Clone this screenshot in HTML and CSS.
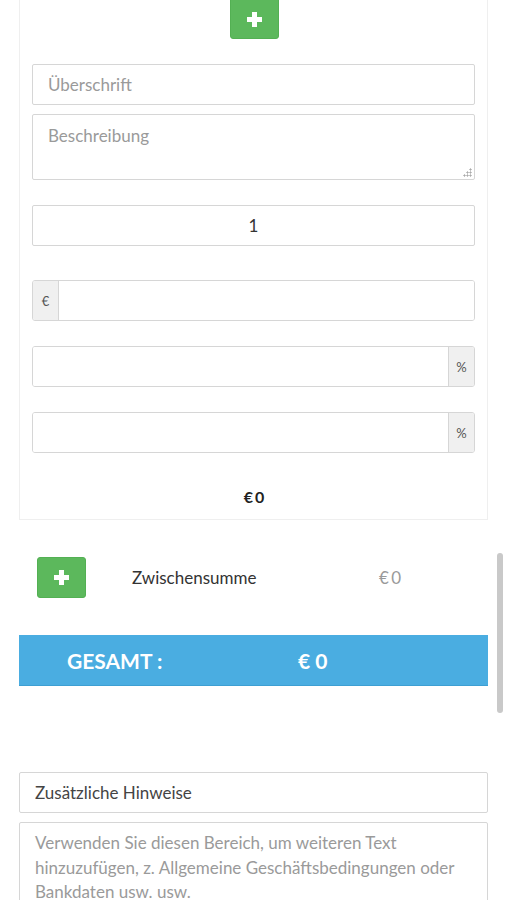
FILE: index.html
```html
<!DOCTYPE html>
<html lang="de">
<head>
<meta charset="utf-8">
<title>Rechnung</title>
<link rel="stylesheet" href="styles.css">
</head>
<body>
<div class="card">
  <div class="top-action">
    <button class="btn-add btn-top" type="button" aria-label="Hinzufügen">
      <svg width="15" height="15" viewBox="0 0 15 15"><path d="M5 0h5v5h5v5h-5v5h-5v-5h-5v-5h5z" fill="#fff"/></svg>
    </button>
  </div>
  <input class="field f-title" type="text" placeholder="Überschrift">
  <div class="desc-wrap">
    <textarea class="field f-desc" placeholder="Beschreibung"></textarea>
  </div>
  <input class="field f-qty" type="text" value="1">
  <div class="group f-price">
    <span class="addon addon-left">€</span>
    <input class="group-input" type="text">
  </div>
  <div class="group f-pct1">
    <input class="group-input" type="text">
    <span class="addon addon-right">%</span>
  </div>
  <div class="group f-pct2">
    <input class="group-input" type="text">
    <span class="addon addon-right">%</span>
  </div>
  <div class="line-total">€ 0</div>
</div>

<div class="summary">
  <div class="subtotal-row">
    <button class="btn-add btn-row" type="button" aria-label="Hinzufügen">
      <svg width="15" height="15" viewBox="0 0 15 15"><path d="M5 0h5v5h5v5h-5v5h-5v-5h-5v-5h5z" fill="#fff"/></svg>
    </button>
    <span class="subtotal-label">Zwischensumme</span>
    <span class="subtotal-value">€ 0</span>
  </div>
  <div class="total-bar">
    <span class="total-label">GESAMT :</span>
    <span class="total-value">€ 0</span>
  </div>

  <input class="field notes-title" type="text" value="Zusätzliche Hinweise">
  <textarea class="field notes-text" placeholder="Verwenden Sie diesen Bereich, um weiteren Text hinzuzufügen, z. Allgemeine Geschäftsbedingungen oder Bankdaten usw. usw."></textarea>
</div>

<div class="scrollbar"></div>
</body>
</html>
```

FILE: styles.css
```css
html, body {
  margin: 0;
  padding: 0;
  background: #fff;
  overflow: hidden;
}
body {
  font-family: Lato, "Noto Sans", "Liberation Sans", sans-serif;
  color: #333;
  width: 506px;
  height: 900px;
}
.card {
  margin: -4px 0 0 19px;
  border: 1px solid #efefef;
  border-top: none;
  padding: 0 12px;
  box-sizing: content-box;
  width: 443px;
  display: flex;
  flex-direction: column;
}
.top-action {
  display: flex;
  justify-content: center;
}
.btn-add {
  display: flex;
  align-items: center;
  justify-content: center;
  background: #5cb85c;
  border: 1px solid #53b053;
  border-radius: 3px;
  padding: 0;
  cursor: pointer;
}
.btn-top {
  width: 49px;
  height: 43px;
  margin-left: 1px;
  padding-top: 4px;
}
.field {
  display: block;
  box-sizing: border-box;
  width: 100%;
  border: 1px solid #d6d6d6;
  border-radius: 2px;
  background: #fff;
  font-family: Lato, "Noto Sans", "Liberation Sans", sans-serif;
  font-size: 17px;
  color: #333;
  padding: 0 15px;
  margin: 0;
  outline: none;
}
.field::placeholder {
  color: #9a9a9a;
}
.f-title {
  height: 41px;
  margin-top: 25px;
}
.desc-wrap {
  position: relative;
  margin-top: 9px;
}
.desc-wrap::after {
  content: "";
  position: absolute;
  right: 3px;
  bottom: 3px;
  width: 9px;
  height: 9px;
  background:
    radial-gradient(circle, #aaa 0.9px, transparent 1.2px) 6px 0 / 3px 3px no-repeat,
    radial-gradient(circle, #aaa 0.9px, transparent 1.2px) 3px 3px / 3px 3px no-repeat,
    radial-gradient(circle, #aaa 0.9px, transparent 1.2px) 6px 3px / 3px 3px no-repeat,
    radial-gradient(circle, #aaa 0.9px, transparent 1.2px) 0 6px / 3px 3px no-repeat,
    radial-gradient(circle, #aaa 0.9px, transparent 1.2px) 3px 6px / 3px 3px no-repeat,
    radial-gradient(circle, #aaa 0.9px, transparent 1.2px) 6px 6px / 3px 3px no-repeat;
  pointer-events: none;
}
.f-desc {
  height: 66px;
  padding-top: 10px;
  resize: none;
}
.f-qty {
  height: 41px;
  margin-top: 25px;
  text-align: center;
}
.group {
  display: flex;
  height: 41px;
  box-sizing: border-box;
  border: 1px solid #d6d6d6;
  border-radius: 3px;
  overflow: hidden;
}
.f-price { margin-top: 34px; }
.f-pct1 { margin-top: 25px; }
.f-pct2 { margin-top: 25px; }
.group-input {
  flex: 1;
  min-width: 0;
  border: none;
  outline: none;
  padding: 0 12px;
  font-family: inherit;
  font-size: 17px;
  background: #fff;
}
.addon {
  display: flex;
  align-items: center;
  justify-content: center;
  width: 25px;
  background: #f0f0f0;
  color: #555;
  font-size: 13px;
}
.addon-left { border-right: 1px solid #d6d6d6; }
.addon-right { border-left: 1px solid #d6d6d6; }
.line-total {
  text-align: center;
  font-weight: 700;
  font-size: 16px;
  color: #222;
  line-height: 20px;
  margin-top: 34px;
  padding-bottom: 12px;
  padding-left: 1px;
  word-spacing: -2px;
}
.summary {
  margin: 0 18px 0 19px;
}
.subtotal-row {
  display: grid;
  grid-template-columns: 49px 201px auto;
  column-gap: 46px;
  align-items: center;
  padding-left: 18px;
  margin-top: 37px;
}
.btn-row {
  width: 49px;
  height: 41px;
}
.subtotal-label {
  font-size: 17px;
  color: #333;
}
.subtotal-value {
  font-size: 17px;
  color: #9a9a9a;
  word-spacing: -2px;
}
.total-bar {
  display: grid;
  grid-template-columns: 231px auto;
  align-items: center;
  height: 51px;
  box-sizing: border-box;
  margin-top: 37px;
  padding-left: 48px;
  background: #4aade1;
  border-bottom: 1px solid #3d9fd3;
  color: #fff;
  font-weight: 700;
  font-size: 21px;
}
.notes-title {
  height: 41px;
  margin-top: 86px;
  color: #444;
}
.notes-text {
  height: 120px;
  margin-top: 9px;
  padding-top: 8px;
  line-height: 24.5px;
  resize: none;
}
.scrollbar {
  position: fixed;
  left: 497px;
  top: 553px;
  width: 6px;
  height: 160px;
  border-radius: 3px;
  background: #c9c9c9;
}
```
